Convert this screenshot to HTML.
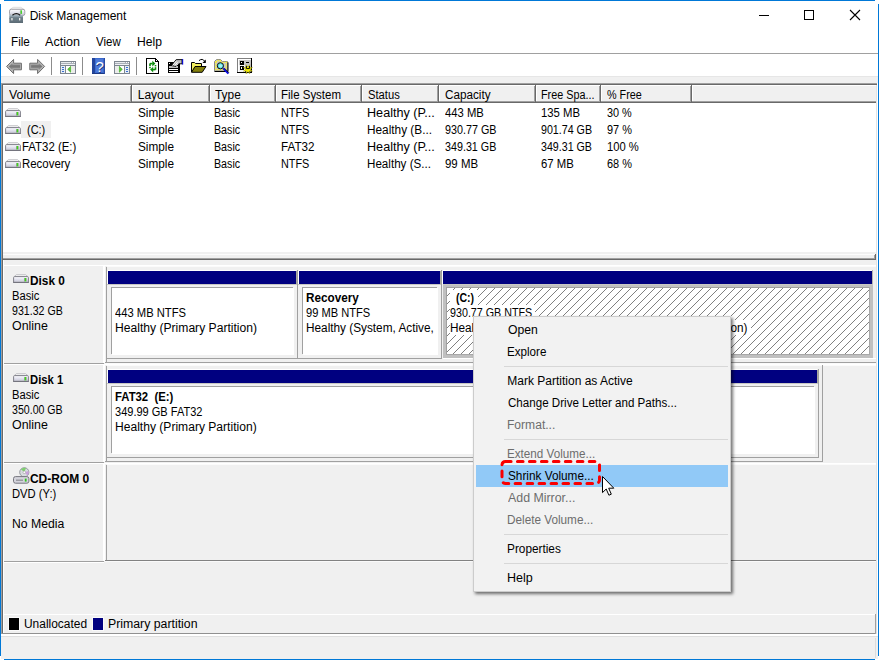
<!DOCTYPE html>
<html lang="en"><head><meta charset="utf-8"><title>Disk Management</title>
<style>
html,body{margin:0;padding:0;}
body{width:879px;height:660px;position:relative;overflow:hidden;background:#fff;font-family:"Liberation Sans", sans-serif;font-size:12px;color:#000;}
.r{position:absolute;display:block;}
.t{position:absolute;white-space:pre;line-height:14px;height:14px;transform-origin:0 0;}
</style></head><body>
<div class="r" style="left:4px;top:0px;width:871px;height:1px;background:#0078d7;"></div>
<div class="r" style="left:0px;top:4px;width:1px;height:652px;background:#0078d7;"></div>
<div class="r" style="left:878px;top:4px;width:1px;height:652px;background:#0078d7;"></div>
<div class="r" style="left:4px;top:659px;width:871px;height:1px;background:#0078d7;"></div>
<div class="t" style="left:29.65px;top:9px;">Disk Management</div>
<div class="t" style="left:10.67px;top:35px;transform:scaleX(0.9741);">File</div>
<div class="t" style="left:45.20px;top:35px;transform:scaleX(1.0467);">Action</div>
<div class="t" style="left:95.95px;top:35px;transform:scaleX(0.9582);">View</div>
<div class="t" style="left:136.54px;top:35px;transform:scaleX(1.0105);">Help</div>
<div class="r" style="left:1px;top:53px;width:877px;height:1px;background:#a0a0a0;"></div>
<div class="r" style="left:1px;top:76px;width:877px;height:8px;background:#f0f0f0;"></div>
<div class="r" style="left:1px;top:76px;width:877px;height:1px;background:#e6e6e6;"></div>
<div class="r" style="left:1px;top:634px;width:877px;height:25px;background:#f0f0f0;"></div>
<div class="r" style="left:1px;top:634px;width:877px;height:1px;background:#ffffff;"></div>
<div class="r" style="left:1px;top:635px;width:877px;height:1px;background:#ffffff;"></div>
<div class="r" style="left:1px;top:83px;width:876px;height:1px;background:#a0a0a0;"></div>
<div class="r" style="left:1px;top:83px;width:1px;height:551px;background:#a0a0a0;"></div>
<div class="r" style="left:2px;top:84px;width:875px;height:1px;background:#696969;"></div>
<div class="r" style="left:2px;top:84px;width:1px;height:550px;background:#696969;"></div>
<div class="r" style="left:877px;top:83px;width:1px;height:553px;background:#ffffff;"></div>
<div class="r" style="left:876px;top:85px;width:1px;height:549px;background:#e3e3e3;"></div>
<div class="r" style="left:3px;top:85px;width:873px;height:17px;background:#f0f0f0;"></div>
<div class="r" style="left:3px;top:85px;width:873px;height:1px;background:#ffffff;"></div>
<div class="r" style="left:3px;top:102px;width:873px;height:1px;background:#696969;"></div>
<div class="r" style="left:3px;top:101px;width:873px;height:1px;background:#a0a0a0;"></div>
<div class="r" style="left:130px;top:86px;width:1px;height:16px;background:#a0a0a0;"></div>
<div class="r" style="left:131px;top:85px;width:1px;height:17px;background:#696969;"></div>
<div class="r" style="left:132px;top:85px;width:1px;height:16px;background:#ffffff;"></div>
<div class="r" style="left:208px;top:86px;width:1px;height:16px;background:#a0a0a0;"></div>
<div class="r" style="left:209px;top:85px;width:1px;height:17px;background:#696969;"></div>
<div class="r" style="left:210px;top:85px;width:1px;height:16px;background:#ffffff;"></div>
<div class="r" style="left:274px;top:86px;width:1px;height:16px;background:#a0a0a0;"></div>
<div class="r" style="left:275px;top:85px;width:1px;height:17px;background:#696969;"></div>
<div class="r" style="left:276px;top:85px;width:1px;height:16px;background:#ffffff;"></div>
<div class="r" style="left:360px;top:86px;width:1px;height:16px;background:#a0a0a0;"></div>
<div class="r" style="left:361px;top:85px;width:1px;height:17px;background:#696969;"></div>
<div class="r" style="left:362px;top:85px;width:1px;height:16px;background:#ffffff;"></div>
<div class="r" style="left:437px;top:86px;width:1px;height:16px;background:#a0a0a0;"></div>
<div class="r" style="left:438px;top:85px;width:1px;height:17px;background:#696969;"></div>
<div class="r" style="left:439px;top:85px;width:1px;height:16px;background:#ffffff;"></div>
<div class="r" style="left:534px;top:86px;width:1px;height:16px;background:#a0a0a0;"></div>
<div class="r" style="left:535px;top:85px;width:1px;height:17px;background:#696969;"></div>
<div class="r" style="left:536px;top:85px;width:1px;height:16px;background:#ffffff;"></div>
<div class="r" style="left:599px;top:86px;width:1px;height:16px;background:#a0a0a0;"></div>
<div class="r" style="left:600px;top:85px;width:1px;height:17px;background:#696969;"></div>
<div class="r" style="left:601px;top:85px;width:1px;height:16px;background:#ffffff;"></div>
<div class="r" style="left:690px;top:86px;width:1px;height:16px;background:#a0a0a0;"></div>
<div class="r" style="left:691px;top:85px;width:1px;height:17px;background:#696969;"></div>
<div class="r" style="left:692px;top:85px;width:1px;height:16px;background:#ffffff;"></div>
<div class="t" style="left:9.25px;top:88px;transform:scaleX(1.0316);">Volume</div>
<div class="t" style="left:137.75px;top:88px;">Layout</div>
<div class="t" style="left:214.75px;top:88px;transform:scaleX(0.9904);">Type</div>
<div class="t" style="left:281.39px;top:88px;transform:scaleX(0.9577);">File System</div>
<div class="t" style="left:367.83px;top:88px;transform:scaleX(0.9360);">Status</div>
<div class="t" style="left:445.11px;top:88px;transform:scaleX(0.9764);">Capacity</div>
<div class="t" style="left:540.84px;top:88px;transform:scaleX(0.9001);">Free Spa...</div>
<div class="t" style="left:607.34px;top:88px;transform:scaleX(0.9006);">% Free</div>
<svg class="r" style="left:5px;top:108px" width="17" height="10" viewBox="0 0 17 10"><defs><linearGradient id="dg1" x1="0" y1="0" x2="0" y2="1"><stop offset="0" stop-color="#ffffff"/><stop offset="0.3" stop-color="#ececf6"/><stop offset="0.75" stop-color="#d2d2e0"/><stop offset="1" stop-color="#b4b4be"/></linearGradient></defs><path d="M3.4 0.7 H12.6 L15 2.8 H1 Z" fill="#f6f6f6" stroke="#b8b8bc" stroke-width="0.8"/><path d="M0.6 8.4 V3.6 Q0.6 2.6 1.6 2.6 H14.4 Q15.4 2.6 15.4 3.6 V8.4 Z" fill="url(#dg1)" stroke="#80808a" stroke-width="1"/><rect x="0.2" y="8" width="15.6" height="1" fill="#74747e"/><rect x="11.6" y="4" width="1.6" height="3.4" fill="#3ddc12"/><rect x="11" y="4" width="0.6" height="3.4" fill="#7a8a7a"/><rect x="13.2" y="4" width="0.5" height="3.4" fill="#8a9a8a"/></svg>
<div class="t" style="left:138.21px;top:106px;transform:scaleX(0.9816);">Simple</div>
<div class="t" style="left:214.15px;top:106px;transform:scaleX(0.8899);">Basic</div>
<div class="t" style="left:281.44px;top:106px;transform:scaleX(0.9037);">NTFS</div>
<div class="t" style="left:367.30px;top:106px;transform:scaleX(1.0522);">Healthy (P...</div>
<div class="t" style="left:445.07px;top:106px;transform:scaleX(0.9382);">443 MB</div>
<div class="t" style="left:540.85px;top:106px;transform:scaleX(0.9435);">135 MB</div>
<div class="t" style="left:607.29px;top:106px;transform:scaleX(0.9063);">30 %</div>
<svg class="r" style="left:5px;top:125px" width="17" height="10" viewBox="0 0 17 10"><defs><linearGradient id="dg2" x1="0" y1="0" x2="0" y2="1"><stop offset="0" stop-color="#ffffff"/><stop offset="0.3" stop-color="#ececf6"/><stop offset="0.75" stop-color="#d2d2e0"/><stop offset="1" stop-color="#b4b4be"/></linearGradient></defs><path d="M3.4 0.7 H12.6 L15 2.8 H1 Z" fill="#f6f6f6" stroke="#b8b8bc" stroke-width="0.8"/><path d="M0.6 8.4 V3.6 Q0.6 2.6 1.6 2.6 H14.4 Q15.4 2.6 15.4 3.6 V8.4 Z" fill="url(#dg2)" stroke="#80808a" stroke-width="1"/><rect x="0.2" y="8" width="15.6" height="1" fill="#74747e"/><rect x="11.6" y="4" width="1.6" height="3.4" fill="#3ddc12"/><rect x="11" y="4" width="0.6" height="3.4" fill="#7a8a7a"/><rect x="13.2" y="4" width="0.5" height="3.4" fill="#8a9a8a"/></svg>
<div class="r" style="left:21px;top:121px;width:30px;height:17px;background:#f0f0f0;"></div>
<div class="t" style="left:26.66px;top:123px;transform:scaleX(0.9142);">(C:)</div>
<div class="t" style="left:138.21px;top:123px;transform:scaleX(0.9816);">Simple</div>
<div class="t" style="left:214.15px;top:123px;transform:scaleX(0.8899);">Basic</div>
<div class="t" style="left:281.44px;top:123px;transform:scaleX(0.9037);">NTFS</div>
<div class="t" style="left:367.36px;top:123px;transform:scaleX(0.9845);">Healthy (B...</div>
<div class="t" style="left:444.81px;top:123px;transform:scaleX(0.8965);">930.77 GB</div>
<div class="t" style="left:541.21px;top:123px;transform:scaleX(0.8893);">901.74 GB</div>
<div class="t" style="left:607.20px;top:123px;transform:scaleX(0.9097);">97 %</div>
<svg class="r" style="left:5px;top:142px" width="17" height="10" viewBox="0 0 17 10"><defs><linearGradient id="dg3" x1="0" y1="0" x2="0" y2="1"><stop offset="0" stop-color="#ffffff"/><stop offset="0.3" stop-color="#ececf6"/><stop offset="0.75" stop-color="#d2d2e0"/><stop offset="1" stop-color="#b4b4be"/></linearGradient></defs><path d="M3.4 0.7 H12.6 L15 2.8 H1 Z" fill="#f6f6f6" stroke="#b8b8bc" stroke-width="0.8"/><path d="M0.6 8.4 V3.6 Q0.6 2.6 1.6 2.6 H14.4 Q15.4 2.6 15.4 3.6 V8.4 Z" fill="url(#dg3)" stroke="#80808a" stroke-width="1"/><rect x="0.2" y="8" width="15.6" height="1" fill="#74747e"/><rect x="11.6" y="4" width="1.6" height="3.4" fill="#3ddc12"/><rect x="11" y="4" width="0.6" height="3.4" fill="#7a8a7a"/><rect x="13.2" y="4" width="0.5" height="3.4" fill="#8a9a8a"/></svg>
<div class="t" style="left:22.40px;top:140px;transform:scaleX(0.9499);">FAT32 (E:)</div>
<div class="t" style="left:138.21px;top:140px;transform:scaleX(0.9816);">Simple</div>
<div class="t" style="left:214.15px;top:140px;transform:scaleX(0.8899);">Basic</div>
<div class="t" style="left:281.38px;top:140px;transform:scaleX(0.9716);">FAT32</div>
<div class="t" style="left:367.30px;top:140px;transform:scaleX(1.0522);">Healthy (P...</div>
<div class="t" style="left:444.90px;top:140px;transform:scaleX(0.8949);">349.31 GB</div>
<div class="t" style="left:541.30px;top:140px;transform:scaleX(0.8878);">349.31 GB</div>
<div class="t" style="left:606.86px;top:140px;transform:scaleX(0.9356);">100 %</div>
<svg class="r" style="left:5px;top:159px" width="17" height="10" viewBox="0 0 17 10"><defs><linearGradient id="dg4" x1="0" y1="0" x2="0" y2="1"><stop offset="0" stop-color="#ffffff"/><stop offset="0.3" stop-color="#ececf6"/><stop offset="0.75" stop-color="#d2d2e0"/><stop offset="1" stop-color="#b4b4be"/></linearGradient></defs><path d="M3.4 0.7 H12.6 L15 2.8 H1 Z" fill="#f6f6f6" stroke="#b8b8bc" stroke-width="0.8"/><path d="M0.6 8.4 V3.6 Q0.6 2.6 1.6 2.6 H14.4 Q15.4 2.6 15.4 3.6 V8.4 Z" fill="url(#dg4)" stroke="#80808a" stroke-width="1"/><rect x="0.2" y="8" width="15.6" height="1" fill="#74747e"/><rect x="11.6" y="4" width="1.6" height="3.4" fill="#3ddc12"/><rect x="11" y="4" width="0.6" height="3.4" fill="#7a8a7a"/><rect x="13.2" y="4" width="0.5" height="3.4" fill="#8a9a8a"/></svg>
<div class="t" style="left:22.39px;top:157px;transform:scaleX(0.9531);">Recovery</div>
<div class="t" style="left:138.21px;top:157px;transform:scaleX(0.9816);">Simple</div>
<div class="t" style="left:214.15px;top:157px;transform:scaleX(0.8899);">Basic</div>
<div class="t" style="left:281.44px;top:157px;transform:scaleX(0.9037);">NTFS</div>
<div class="t" style="left:367.38px;top:157px;transform:scaleX(0.9689);">Healthy (S...</div>
<div class="t" style="left:444.78px;top:157px;transform:scaleX(0.9544);">99 MB</div>
<div class="t" style="left:541.13px;top:157px;transform:scaleX(0.9439);">67 MB</div>
<div class="t" style="left:607.15px;top:157px;transform:scaleX(0.9115);">68 %</div>
<div class="r" style="left:3px;top:252px;width:873px;height:382px;background:#f0f0f0;"></div>
<div class="r" style="left:3px;top:254px;width:873px;height:1px;background:#fcfcfc;"></div>
<div class="r" style="left:3px;top:258px;width:873px;height:1px;background:#a0a0a0;"></div>
<div class="r" style="left:3px;top:259px;width:873px;height:1px;background:#696969;"></div>
<div class="r" style="left:875px;top:254px;width:1px;height:6px;background:#696969;"></div>
<div class="r" style="left:874px;top:255px;width:1px;height:3px;background:#a0a0a0;"></div>
<div class="r" style="left:3px;top:260px;width:1px;height:373px;background:#ffffff;"></div>
<div class="r" style="left:2px;top:633px;width:874px;height:1px;background:#909090;"></div>
<div class="r" style="left:4px;top:265px;width:872px;height:1px;background:#ffffff;"></div>
<div class="r" style="left:107px;top:266px;width:769px;height:1px;background:#fbfbfb;"></div>
<div class="r" style="left:4px;top:363px;width:100px;height:1px;background:#a0a0a0;"></div>
<div class="r" style="left:4px;top:364px;width:100px;height:1px;background:#ffffff;"></div>
<div class="r" style="left:103px;top:266px;width:1px;height:97px;background:#ffffff;"></div>
<div class="r" style="left:104px;top:266px;width:1px;height:97px;background:#ffffff;"></div>
<div class="r" style="left:106px;top:267px;width:1px;height:96px;background:#a0a0a0;"></div>
<svg class="r" style="left:13px;top:274px" width="17" height="10" viewBox="0 0 17 10"><defs><linearGradient id="dg5" x1="0" y1="0" x2="0" y2="1"><stop offset="0" stop-color="#ffffff"/><stop offset="0.3" stop-color="#ececf6"/><stop offset="0.75" stop-color="#d2d2e0"/><stop offset="1" stop-color="#b4b4be"/></linearGradient></defs><path d="M3.4 0.7 H12.6 L15 2.8 H1 Z" fill="#f6f6f6" stroke="#b8b8bc" stroke-width="0.8"/><path d="M0.6 8.4 V3.6 Q0.6 2.6 1.6 2.6 H14.4 Q15.4 2.6 15.4 3.6 V8.4 Z" fill="url(#dg5)" stroke="#80808a" stroke-width="1"/><rect x="0.2" y="8" width="15.6" height="1" fill="#74747e"/><rect x="11.6" y="4" width="1.6" height="3.4" fill="#3ddc12"/><rect x="11" y="4" width="0.6" height="3.4" fill="#7a8a7a"/><rect x="13.2" y="4" width="0.5" height="3.4" fill="#8a9a8a"/></svg>
<div class="t" style="left:29.61px;top:274px;transform:scaleX(0.9859);font-weight:bold;">Disk 0</div>
<div class="t" style="left:11.61px;top:289px;transform:scaleX(0.9344);">Basic</div>
<div class="t" style="left:12.01px;top:304px;transform:scaleX(0.8849);">931.32 GB</div>
<div class="t" style="left:11.93px;top:319px;transform:scaleX(1.0338);">Online</div>
<div class="r" style="left:108px;top:271px;width:188px;height:13px;background:#000080;"></div>
<div class="r" style="left:108px;top:270px;width:188px;height:1px;background:#ffffff;"></div>
<div class="r" style="left:107px;top:271px;width:1px;height:13px;background:#ffffff;"></div>
<div class="r" style="left:107px;top:284px;width:190px;height:1px;background:#c8c8c4;"></div>
<div class="r" style="left:112px;top:288px;width:182px;height:67px;background:#ffffff;"></div>
<div class="r" style="left:111px;top:287px;width:182px;height:1px;background:#a0a0a0;"></div>
<div class="r" style="left:111px;top:287px;width:1px;height:67px;background:#a0a0a0;"></div>
<div class="r" style="left:107px;top:358px;width:191px;height:1px;background:#a0a0a0;"></div>
<div class="r" style="left:297px;top:270px;width:1px;height:89px;background:#a0a0a0;"></div>
<div class="r" style="left:296px;top:271px;width:1px;height:13px;background:#a8a8a0;"></div>
<div class="t" style="left:114.77px;top:306px;transform:scaleX(0.9340);">443 MB NTFS</div>
<div class="t" style="left:114.54px;top:321px;transform:scaleX(1.0097);">Healthy (Primary Partition)</div>
<div class="r" style="left:299px;top:271px;width:141px;height:13px;background:#000080;"></div>
<div class="r" style="left:299px;top:270px;width:141px;height:1px;background:#ffffff;"></div>
<div class="r" style="left:298px;top:271px;width:1px;height:13px;background:#ffffff;"></div>
<div class="r" style="left:298px;top:284px;width:143px;height:1px;background:#c8c8c4;"></div>
<div class="r" style="left:303px;top:288px;width:135px;height:67px;background:#ffffff;"></div>
<div class="r" style="left:302px;top:287px;width:135px;height:1px;background:#a0a0a0;"></div>
<div class="r" style="left:302px;top:287px;width:1px;height:67px;background:#a0a0a0;"></div>
<div class="r" style="left:298px;top:358px;width:144px;height:1px;background:#a0a0a0;"></div>
<div class="r" style="left:441px;top:270px;width:1px;height:89px;background:#a0a0a0;"></div>
<div class="r" style="left:440px;top:271px;width:1px;height:13px;background:#a8a8a0;"></div>
<div class="t" style="left:305.72px;top:291px;transform:scaleX(0.9772);font-weight:bold;">Recovery</div>
<div class="t" style="left:305.99px;top:306px;transform:scaleX(0.9262);">99 MB NTFS</div>
<div class="t" style="left:305.57px;top:321px;transform:scaleX(0.9827);">Healthy (System, Active,</div>
<div class="r" style="left:443px;top:271px;width:429px;height:13px;background:#000080;"></div>
<div class="r" style="left:443px;top:270px;width:429px;height:1px;background:#ffffff;"></div>
<div class="r" style="left:442px;top:271px;width:1px;height:13px;background:#ffffff;"></div>
<div class="r" style="left:872px;top:270px;width:1px;height:14px;background:#b4b4ac;"></div>
<div class="r" style="left:443px;top:284px;width:430px;height:74px;background:#c0c0c0;"></div>
<div class="r" style="left:443px;top:284px;width:430px;height:1px;background:#c8c8c4;"></div>
<svg class="r" style="left:447px;top:288px" width="422" height="66" shape-rendering="crispEdges"><defs><pattern id="hatch" width="8" height="8" patternUnits="userSpaceOnUse"><rect width="8" height="8" fill="#fff"/><g fill="#808080"><rect x="0" y="7" width="1" height="1"/><rect x="1" y="6" width="1" height="1"/><rect x="2" y="5" width="1" height="1"/><rect x="3" y="4" width="1" height="1"/><rect x="4" y="3" width="1" height="1"/><rect x="5" y="2" width="1" height="1"/><rect x="6" y="1" width="1" height="1"/><rect x="7" y="0" width="1" height="1"/></g></pattern></defs><rect width="422" height="66" fill="url(#hatch)"/></svg>
<div class="r" style="left:446px;top:287px;width:424px;height:1px;background:#a0a0a0;"></div>
<div class="r" style="left:446px;top:287px;width:1px;height:68px;background:#a0a0a0;"></div>
<div class="r" style="left:446px;top:354px;width:424px;height:1px;background:#a8a8a8;"></div>
<div class="r" style="left:869px;top:287px;width:1px;height:68px;background:#a8a8a8;"></div>
<div class="r" style="left:450px;top:290px;width:28px;height:15px;background:#ffffff;"></div>
<div class="t" style="left:456.12px;top:291px;transform:scaleX(0.8766);font-weight:bold;">(C:)</div>
<div class="r" style="left:450px;top:305px;width:85px;height:15px;background:#ffffff;"></div>
<div class="t" style="left:449.71px;top:306px;transform:scaleX(0.8936);">930.77 GB NTFS</div>
<div class="r" style="left:450px;top:320px;width:301px;height:15px;background:#ffffff;"></div>
<div class="t" style="left:449.57px;top:321px;transform:scaleX(0.9801);">Healthy (Boot, Page File, Crash Dump, Primary Partition)</div>
<div class="r" style="left:443px;top:358px;width:433px;height:1px;background:#ffffff;"></div>
<div class="r" style="left:105px;top:362px;width:771px;height:1px;background:#a0a0a0;"></div>
<div class="r" style="left:105px;top:363px;width:771px;height:1px;background:#fafafa;"></div>
<div class="r" style="left:4px;top:364px;width:872px;height:1px;background:#ffffff;"></div>
<div class="r" style="left:107px;top:365px;width:769px;height:1px;background:#fbfbfb;"></div>
<div class="r" style="left:4px;top:462px;width:100px;height:1px;background:#a0a0a0;"></div>
<div class="r" style="left:4px;top:463px;width:100px;height:1px;background:#ffffff;"></div>
<div class="r" style="left:103px;top:365px;width:1px;height:97px;background:#ffffff;"></div>
<div class="r" style="left:104px;top:365px;width:1px;height:97px;background:#ffffff;"></div>
<div class="r" style="left:106px;top:366px;width:1px;height:96px;background:#a0a0a0;"></div>
<svg class="r" style="left:13px;top:373px" width="17" height="10" viewBox="0 0 17 10"><defs><linearGradient id="dg6" x1="0" y1="0" x2="0" y2="1"><stop offset="0" stop-color="#ffffff"/><stop offset="0.3" stop-color="#ececf6"/><stop offset="0.75" stop-color="#d2d2e0"/><stop offset="1" stop-color="#b4b4be"/></linearGradient></defs><path d="M3.4 0.7 H12.6 L15 2.8 H1 Z" fill="#f6f6f6" stroke="#b8b8bc" stroke-width="0.8"/><path d="M0.6 8.4 V3.6 Q0.6 2.6 1.6 2.6 H14.4 Q15.4 2.6 15.4 3.6 V8.4 Z" fill="url(#dg6)" stroke="#80808a" stroke-width="1"/><rect x="0.2" y="8" width="15.6" height="1" fill="#74747e"/><rect x="11.6" y="4" width="1.6" height="3.4" fill="#3ddc12"/><rect x="11" y="4" width="0.6" height="3.4" fill="#7a8a7a"/><rect x="13.2" y="4" width="0.5" height="3.4" fill="#8a9a8a"/></svg>
<div class="t" style="left:29.65px;top:373px;transform:scaleX(0.9377);font-weight:bold;">Disk 1</div>
<div class="t" style="left:11.61px;top:388px;transform:scaleX(0.9344);">Basic</div>
<div class="t" style="left:12.10px;top:403px;transform:scaleX(0.8833);">350.00 GB</div>
<div class="t" style="left:11.93px;top:418px;transform:scaleX(1.0338);">Online</div>
<div class="r" style="left:108px;top:370px;width:709px;height:13px;background:#000080;"></div>
<div class="r" style="left:108px;top:369px;width:709px;height:1px;background:#ffffff;"></div>
<div class="r" style="left:107px;top:370px;width:1px;height:13px;background:#ffffff;"></div>
<div class="r" style="left:107px;top:383px;width:711px;height:1px;background:#c8c8c4;"></div>
<div class="r" style="left:112px;top:387px;width:703px;height:67px;background:#ffffff;"></div>
<div class="r" style="left:111px;top:386px;width:703px;height:1px;background:#a0a0a0;"></div>
<div class="r" style="left:111px;top:386px;width:1px;height:67px;background:#a0a0a0;"></div>
<div class="r" style="left:107px;top:457px;width:712px;height:1px;background:#a0a0a0;"></div>
<div class="r" style="left:818px;top:369px;width:1px;height:89px;background:#a0a0a0;"></div>
<div class="r" style="left:817px;top:370px;width:1px;height:13px;background:#a8a8a0;"></div>
<div class="t" style="left:114.74px;top:390px;transform:scaleX(0.9439);font-weight:bold;">FAT32  (E:)</div>
<div class="t" style="left:115.09px;top:405px;transform:scaleX(0.9188);">349.99 GB FAT32</div>
<div class="t" style="left:114.54px;top:420px;transform:scaleX(1.0068);">Healthy (Primary Partition)</div>
<div class="r" style="left:105px;top:461px;width:718px;height:1px;background:#a0a0a0;"></div>
<div class="r" style="left:822px;top:365px;width:1px;height:97px;background:#a0a0a0;"></div>
<div class="r" style="left:4px;top:463px;width:872px;height:1px;background:#ffffff;"></div>
<div class="r" style="left:107px;top:464px;width:769px;height:1px;background:#fbfbfb;"></div>
<div class="r" style="left:4px;top:561px;width:100px;height:1px;background:#a0a0a0;"></div>
<div class="r" style="left:4px;top:562px;width:100px;height:1px;background:#ffffff;"></div>
<div class="r" style="left:103px;top:464px;width:1px;height:97px;background:#ffffff;"></div>
<div class="r" style="left:104px;top:464px;width:1px;height:97px;background:#ffffff;"></div>
<div class="r" style="left:106px;top:465px;width:1px;height:96px;background:#a0a0a0;"></div>
<svg class="r" style="left:13px;top:467px" width="17" height="17" viewBox="0 0 17 17"><circle cx="11.3" cy="5.3" r="4.6" fill="#d8dce0" stroke="#8c9096" stroke-width="0.9"/><path d="M11.3 5.3 L8 2.2 A4.6 4.6 0 0 1 13 1 Z" fill="#7fcf6f"/><path d="M11.3 5.3 L15.6 4 A4.6 4.6 0 0 1 14.6 8.4 Z" fill="#c9a0dc"/><circle cx="11.3" cy="5.3" r="1.3" fill="#fff" stroke="#9a9a9a" stroke-width="0.6"/><rect x="0.5" y="9.6" width="15.4" height="6.6" rx="2" ry="2" fill="#d4d4dc" stroke="#76767e" stroke-width="1"/><rect x="3" y="12.6" width="7" height="1.2" fill="#8a8a92"/><rect x="11.8" y="11.6" width="1.8" height="3" fill="#2fc31f"/></svg>
<div class="t" style="left:29.95px;top:472px;font-weight:bold;">CD-ROM 0</div>
<div class="t" style="left:11.61px;top:487px;transform:scaleX(0.9356);">DVD (Y:)</div>
<div class="t" style="left:11.53px;top:517px;transform:scaleX(1.0162);">No Media</div>
<div class="r" style="left:105px;top:560px;width:771px;height:1px;background:#828282;"></div>
<div class="r" style="left:105px;top:561px;width:771px;height:1px;background:#fafafa;"></div>
<div class="r" style="left:4px;top:614px;width:871px;height:1px;background:#ffffff;"></div>
<div class="r" style="left:875px;top:614px;width:1px;height:20px;background:#a0a0a0;"></div>
<div class="r" style="left:1px;top:636px;width:877px;height:1px;background:#dfdfdf;"></div>
<div class="r" style="left:875px;top:638px;width:1px;height:20px;background:#dcdcdc;"></div>
<div class="r" style="left:8px;top:617px;width:12px;height:14px;background:#fafafa;"></div>
<div class="r" style="left:9px;top:618px;width:10px;height:12px;background:#000;"></div>
<div class="t" style="left:23.90px;top:617px;transform:scaleX(0.9951);">Unallocated</div>
<div class="r" style="left:92px;top:617px;width:12px;height:14px;background:#fafafa;"></div>
<div class="r" style="left:93px;top:618px;width:10px;height:12px;background:#000080;"></div>
<div class="t" style="left:107.53px;top:617px;transform:scaleX(1.0247);">Primary partition</div>
<svg class="r" style="left:750px;top:5px" width="120" height="22" viewBox="750 5 120 22" shape-rendering="crispEdges"><path d="M759 15.5 H769" stroke="#000" stroke-width="1"/><rect x="804.5" y="10.5" width="9" height="9" fill="none" stroke="#000" stroke-width="1"/><path d="M850 10 L860 20 M860 10 L850 20" stroke="#000" stroke-width="1.1" shape-rendering="geometricPrecision"/></svg>
<svg class="r" style="left:9px;top:6px" width="17" height="18" viewBox="0 0 17 18"><defs><linearGradient id="ti1" x1="0" y1="0" x2="0" y2="1"><stop offset="0" stop-color="#ffffff"/><stop offset="0.5" stop-color="#e4e4ee"/><stop offset="1" stop-color="#c2c2cc"/></linearGradient><linearGradient id="ti2" x1="0" y1="0" x2="0" y2="1"><stop offset="0" stop-color="#7f8f9a"/><stop offset="1" stop-color="#5a6a74"/></linearGradient></defs><path d="M4.2 1.3 H11.8 L15.4 3.6 H0.8 Z" fill="#f3f3f3" stroke="#cfcfcf" stroke-width="0.6"/><rect x="0.5" y="3.3" width="15.3" height="6.2" rx="1.8" fill="url(#ti1)" stroke="#9a9aa2" stroke-width="0.9"/><rect x="11.4" y="4.3" width="1.5" height="3.6" fill="#35d018"/><rect x="10.9" y="4.3" width="0.5" height="3.6" fill="#9aa89a"/><rect x="0.3" y="9.3" width="13.7" height="7.7" fill="url(#ti2)"/><rect x="0.3" y="9.3" width="13.7" height="1.1" fill="#aebfca"/><rect x="0.3" y="12.3" width="13.7" height="0.8" fill="#6a7a84"/><path d="M3.4 9.2 Q7.3 5.9 11.2 9.2" fill="none" stroke="#181818" stroke-width="1.2"/><rect x="2.3" y="12" width="1.3" height="2.4" fill="#eeeeee"/><rect x="10" y="12" width="1.3" height="2.4" fill="#eeeeee"/></svg>
<svg class="r" style="left:0px;top:54px" width="262" height="22" viewBox="0 54 262 22">
<defs>
<linearGradient id="ag" x1="0" y1="0" x2="0" y2="1"><stop offset="0" stop-color="#a4a4a4"/><stop offset="0.45" stop-color="#747474"/><stop offset="1" stop-color="#a0a0a0"/></linearGradient>
<linearGradient id="hg" x1="0" y1="0" x2="1" y2="0"><stop offset="0" stop-color="#24469c"/><stop offset="0.22" stop-color="#24469c"/><stop offset="0.24" stop-color="#3c6cd0"/><stop offset="1" stop-color="#3a66c8"/></linearGradient>
</defs>
<!-- back / forward -->
<path d="M6.6 66.4 L13.6 59.4 V63.2 H21.4 V69.8 H13.6 V73.6 Z" fill="#b6b6b6" stroke="#6c6c6c" stroke-width="1" stroke-linejoin="round"/>
<path d="M8.8 66.4 L12.5 62.7 V64.5 H20.1 V68.5 H12.5 V70.3 Z" fill="url(#ag)"/>
<path d="M44.6 66.4 L37.6 59.4 V63.2 H29.8 V69.8 H37.6 V73.6 Z" fill="#b6b6b6" stroke="#6c6c6c" stroke-width="1" stroke-linejoin="round"/>
<path d="M42.4 66.4 L38.7 62.7 V64.5 H31.1 V68.5 H38.7 V70.3 Z" fill="url(#ag)"/>
<rect x="51" y="57" width="1" height="18" fill="#8c8c8c"/>
<!-- console tree -->
<g shape-rendering="crispEdges">
<rect x="60" y="61" width="16" height="13" fill="#7e8690"/>
<rect x="61" y="62" width="14" height="3" fill="#aab0b8"/>
<rect x="61" y="62" width="10" height="1" fill="#e8eaee"/>
<rect x="72" y="62" width="1" height="1" fill="#fff"/><rect x="74" y="62" width="1" height="1" fill="#fff"/>
<rect x="61" y="64" width="14" height="1" fill="#eef0f4"/>
<rect x="61" y="66" width="4" height="7" fill="#e6eef8"/>
<rect x="66" y="66" width="9" height="7" fill="#ffffff"/>
<rect x="72" y="66" width="3" height="7" fill="#ececec"/>
<rect x="62" y="67" width="2" height="1" fill="#3a6fd0"/><rect x="62" y="69" width="2" height="1" fill="#3a6fd0"/><rect x="62" y="71" width="2" height="1" fill="#3a6fd0"/>
</g>
<path d="M70.8 66.2 V72.4 L67.6 69.3 Z" fill="#58c038" stroke="#3aa020" stroke-width="0.5"/>
<rect x="82" y="57" width="1" height="18" fill="#8c8c8c"/>
<!-- help -->
<rect x="92" y="58" width="13" height="16" fill="url(#hg)"/>
<rect x="96" y="59" width="7" height="13" fill="#5c86e2" opacity="0.55"/>
<rect x="92" y="73" width="13" height="1" fill="#1d3a86"/><rect x="104" y="58" width="1" height="16" fill="#2a4aa0"/>
<text x="100.4" y="72.6" font-family="Liberation Sans, sans-serif" font-size="15" fill="#20387c" text-anchor="middle">?</text>
<text x="99.6" y="72" font-family="Liberation Sans, sans-serif" font-size="15" fill="#ffffff" text-anchor="middle">?</text>
<!-- action pane -->
<g shape-rendering="crispEdges">
<rect x="114" y="61" width="16" height="13" fill="#7e8690"/>
<rect x="115" y="62" width="14" height="3" fill="#aab0b8"/>
<rect x="115" y="62" width="10" height="1" fill="#e8eaee"/>
<rect x="126" y="62" width="1" height="1" fill="#fff"/><rect x="128" y="62" width="1" height="1" fill="#fff"/>
<rect x="115" y="64" width="14" height="1" fill="#eef0f4"/>
<rect x="115" y="66" width="9" height="7" fill="#ffffff"/>
<rect x="115" y="66" width="3" height="7" fill="#ececec"/>
<rect x="125" y="66" width="4" height="7" fill="#e6eef8"/>
<rect x="126" y="67" width="2" height="1" fill="#3a6fd0"/><rect x="126" y="69" width="2" height="1" fill="#3a6fd0"/><rect x="126" y="71" width="2" height="1" fill="#3a6fd0"/>
</g>
<path d="M119.2 66.2 V72.4 L122.4 69.3 Z" fill="#58c038" stroke="#3aa020" stroke-width="0.5"/>
<rect x="136" y="57" width="1" height="18" fill="#8c8c8c"/>
<!-- refresh page -->
<g shape-rendering="crispEdges">
<rect x="146" y="58" width="13" height="16" fill="#000"/>
<rect x="147" y="59" width="11" height="14" fill="#fff"/>
<rect x="155" y="58" width="4" height="4" fill="#fff"/>
<rect x="155" y="58" width="1" height="4" fill="#000"/><rect x="155" y="61" width="4" height="1" fill="#000"/>
<rect x="156" y="59" width="1" height="1" fill="#000"/><rect x="157" y="60" width="1" height="1" fill="#000"/><rect x="158" y="61" width="1" height="1" fill="#000"/>
</g><g fill="#0c8c0c">
<path d="M152.3 60.8 L155.4 63.6 L152.3 66.4 Z"/>
<rect x="150" y="62.8" width="2.6" height="1.6"/><rect x="149.2" y="63.4" width="1.6" height="2.6"/><rect x="149.2" y="66.8" width="1.6" height="1.4"/>
<path d="M153.2 66.8 L150.1 69.6 L153.2 72.4 Z"/>
<rect x="152.9" y="68.8" width="2.6" height="1.6"/><rect x="154.7" y="67.2" width="1.6" height="2.6"/><rect x="154.7" y="65" width="1.6" height="1.4"/>
</g><g>
</g>
<!-- properties -->
<g shape-rendering="crispEdges">
<rect x="168" y="62" width="12" height="11" fill="#000"/>
<rect x="169" y="63" width="1" height="1" fill="#fff"/>
<rect x="169" y="66" width="9" height="2" fill="#c0c0c0"/>
<rect x="169" y="69" width="9" height="1" fill="#fff"/>
<rect x="169" y="71" width="9" height="1" fill="#fff"/>
</g>
<path d="M171.4 65.6 L176.2 59.6 H182 V63.8 H178.6 L176 66.4 Z" fill="#c0c0c0" stroke="#000" stroke-width="0.9" stroke-linejoin="round"/>
<path d="M172.6 65.6 L176.2 61.2 M174.6 65.8 L177.6 62.2 M176.4 65.6 L178.2 63.6" stroke="#fff" stroke-width="0.9"/>
<rect x="182" y="59" width="1.2" height="5.6" fill="#0a0ad0"/>
<!-- open folder -->
<path d="M191.5 72 V62.5 H194.5 L195.5 63.5 H201.5 V66" fill="#f4f060" stroke="#000" stroke-width="1"/>
<path d="M191.5 72.3 L195 66.5 H206 L202.2 72.3 Z" fill="#84800c" stroke="#000" stroke-width="1" stroke-linejoin="round"/>
<path d="M199 60.6 Q202.4 57.8 204.8 61.4" fill="none" stroke="#000" stroke-width="1"/>
<path d="M205.8 59.6 V63 H202.4 Z" fill="#000"/>
<!-- find (folder + magnifier) -->
<path d="M214.5 71 V61.5 L216.5 59.5 H220.5 L222.5 61.5 H227.5 V71 Z" fill="#c8c8c8" stroke="#8a8a8a" stroke-width="1"/>
<path d="M215.8 62 L217.2 60.6 H220 L221.6 62.4 H226.4 V69.6" fill="none" stroke="#fff420" stroke-width="1.5" stroke-dasharray="1.3 1"/>
<path d="M215.8 62 V69.6 H224" fill="none" stroke="#fff420" stroke-width="1.5" stroke-dasharray="1.3 1"/>
<path d="M214.5 71.5 H228 V62.4" fill="none" stroke="#000" stroke-width="1"/>
<circle cx="220.4" cy="65.8" r="3.1" fill="#58e0e8" stroke="#101010" stroke-width="1"/>
<circle cx="220.6" cy="65.8" r="1.6" fill="#a8f2f4"/>
<path d="M223.2 68.4 L228.4 73.6" stroke="#0a0ae0" stroke-width="2"/>
<path d="M224.4 68.2 L229 72.8" stroke="#000" stroke-width="0.7"/>
<!-- view options -->
<g shape-rendering="crispEdges">
<rect x="237" y="58" width="15" height="15" fill="#c6c6c6"/>
<rect x="237" y="58" width="15" height="1" fill="#808080"/><rect x="237" y="58" width="1" height="15" fill="#808080"/>
<rect x="238" y="59" width="13" height="1" fill="#fff"/><rect x="238" y="59" width="1" height="13" fill="#fff"/>
<rect x="239" y="65" width="6" height="7" fill="#f2f2f2"/>
<rect x="251" y="58" width="1" height="15" fill="#000"/><rect x="237" y="72" width="15" height="1" fill="#000"/>
<rect x="240" y="61" width="4" height="4" fill="#000"/><rect x="241" y="62" width="1" height="1" fill="#fff"/>
<rect x="240" y="66" width="4" height="4" fill="#000"/><rect x="241" y="67" width="1" height="2" fill="#fff"/>
<rect x="246" y="62" width="3" height="1" fill="#000"/>
</g>
<path d="M246.0 64.7 L247.9 67.0 L249.8 64.7 L249.5 67.7 L252.5 67.4 L250.2 69.3 L252.5 71.2 L249.5 70.9 L249.8 73.9 L247.9 71.6 L246.0 73.9 L246.3 70.9 L243.3 71.2 L245.6 69.3 L243.3 67.4 L246.3 67.7 Z" fill="#f6f200" stroke="#8a8200" stroke-width="0.4"/>
<path d="M246.4 66 V68.6 H249.4 V66" fill="none" stroke="#000" stroke-width="1"/>
<path d="M245 71.2 l1.2 1 M250.6 71 l-1.2 1 M247.9 72 v1.2" stroke="#000" stroke-width="0.7"/>
</svg>

<div class="r" style="left:473px;top:316px;width:256px;height:274px;background:#f2f2f2;border:1px solid #cccccc;box-shadow:2px 2px 3px 0px rgba(0,0,0,0.55)"></div>
<div class="t" style="left:507.69px;top:323px;transform:scaleX(1.0167);">Open</div>
<div class="t" style="left:507.33px;top:345px;transform:scaleX(0.9690);">Explore</div>
<div class="r" style="left:504px;top:366px;width:224px;height:1px;background:#d7d7d7;"></div>
<div class="t" style="left:507.30px;top:374px;">Mark Partition as Active</div>
<div class="t" style="left:507.67px;top:396px;transform:scaleX(0.9663);">Change Drive Letter and Paths...</div>
<div class="t" style="left:507.29px;top:418px;transform:scaleX(1.0060);color:#6d6d6d;">Format...</div>
<div class="r" style="left:504px;top:439px;width:224px;height:1px;background:#d7d7d7;"></div>
<div class="t" style="left:507.33px;top:447px;transform:scaleX(0.9725);color:#6d6d6d;">Extend Volume...</div>
<div class="r" style="left:476px;top:465px;width:252px;height:22px;background:#91c9f7;"></div>
<div class="t" style="left:507.76px;top:469px;transform:scaleX(0.9820);">Shrink Volume...</div>
<div class="t" style="left:508.25px;top:491px;transform:scaleX(1.0309);color:#6d6d6d;">Add Mirror...</div>
<div class="t" style="left:507.32px;top:513px;transform:scaleX(0.9795);color:#6d6d6d;">Delete Volume...</div>
<div class="r" style="left:504px;top:534px;width:224px;height:1px;background:#d7d7d7;"></div>
<div class="t" style="left:507.31px;top:542px;transform:scaleX(0.9842);">Properties</div>
<div class="r" style="left:504px;top:563px;width:224px;height:1px;background:#d7d7d7;"></div>
<div class="t" style="left:507.26px;top:571px;transform:scaleX(1.0427);">Help</div>
<svg class="r" style="left:495px;top:455px" width="125" height="45" viewBox="495 455 125 45"><rect x="502" y="461.5" width="97.5" height="22" rx="3.5" ry="3.5" fill="none" stroke="#fa0000" stroke-width="3" stroke-dasharray="5.6 6.368" stroke-linecap="round"/><path d="M602.5 476.5 V492.6 L606.2 489 L608.9 495.2 L611.3 494.2 L608.7 488.2 H613.8 Z" fill="#fff" stroke="#000" stroke-width="1" stroke-linejoin="miter"/></svg>
</body></html>
